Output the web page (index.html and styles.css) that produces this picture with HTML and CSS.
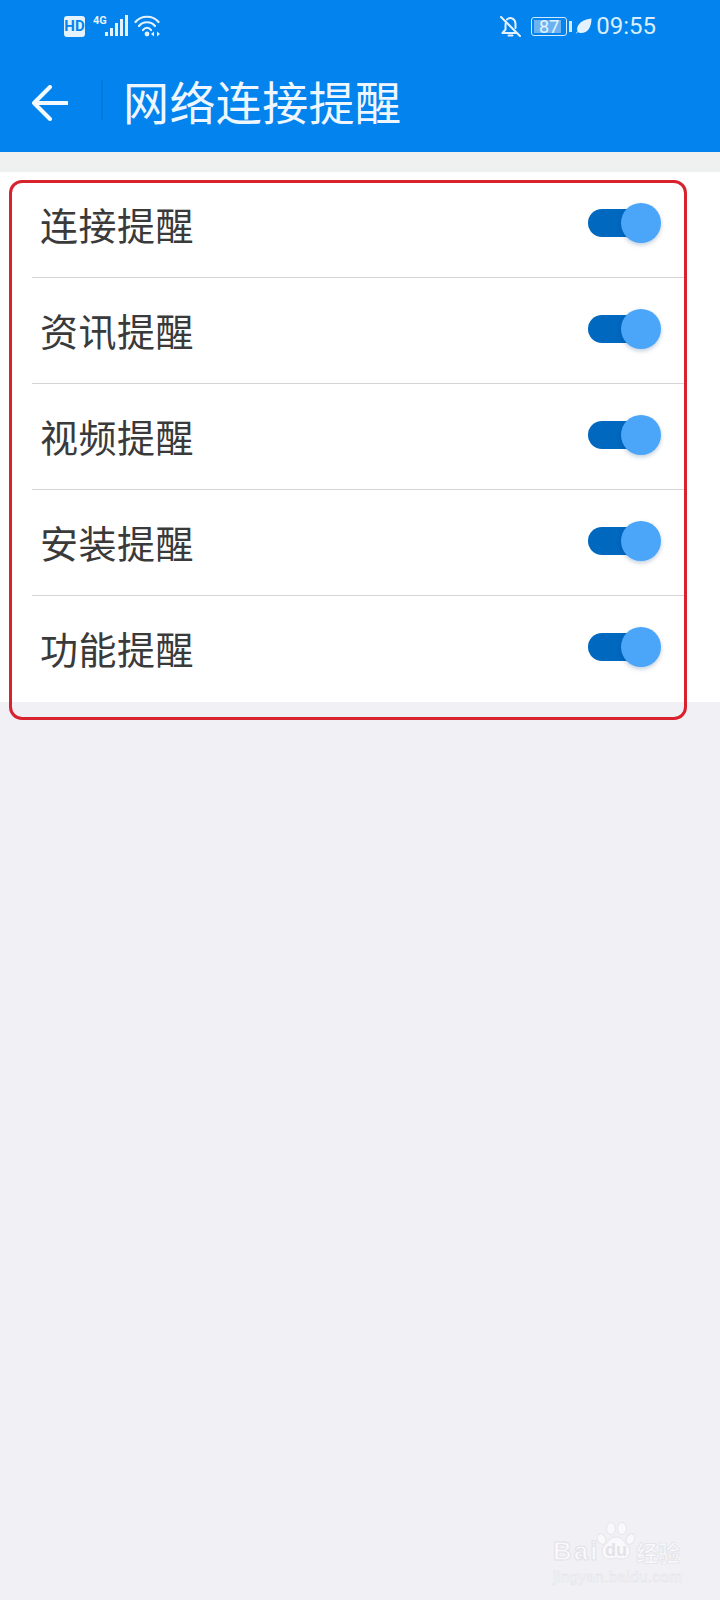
FILE: index.html
```html
<!DOCTYPE html>
<html lang="zh-CN">
<head>
<meta charset="utf-8">
<title>网络连接提醒</title>
<link rel="stylesheet" href="styles.css">
</head>
<body>
<div class="page">
  <header class="top">
    <div class="status">
      <div class="status-left">
        <span class="hd">HD</span>
        <span class="net">4G</span>
        <svg class="signal" width="23" height="22" viewBox="0 0 23 22"><g fill="#e4f2fe"><rect x="0" y="17" width="3" height="4"/><rect x="5" y="13" width="3" height="8"/><rect x="10" y="8" width="3" height="13"/><rect x="15" y="4" width="3" height="17"/><rect x="20" y="0" width="3" height="21"/></g></svg>
        <svg class="wifi" width="27" height="22" viewBox="0 0 27 22"><g fill="none" stroke="#e4f2fe" stroke-width="2.200" stroke-linecap="round"><path d="M1.500 7C7 0 19 0 24.500 7"/><path d="M5 11C9 6 17 6 21 11"/><path d="M9 15C11 12 15 12 17 15"/></g><circle cx="13" cy="19" r="2.400" fill="#e4f2fe"/><path d="M20 16.500l-3 2.500 3 2.500zM23 16.500l3 2.500-3 2.500z" fill="#e4f2fe"/></svg>
      </div>
      <div class="status-right">
        <svg class="bell" width="21" height="21" viewBox="0 0 21 21"><g fill="none" stroke="#e4f2fe" stroke-width="2" stroke-linecap="round" stroke-linejoin="round"><path d="M1 1l19 19"/><path d="M6 6.500C5.500 7.500 5.500 8.500 5.500 10v3.500L2.500 17h14"/><path d="M7 3.500C10.500 .5 15.500 2.500 15.500 8v4"/><path d="M8.500 19.500h4"/></g></svg>
        <span class="battery"><span class="battery-fill"></span><span class="battery-num">87</span></span>
        <span class="battery-tip"></span>
        <svg class="leaf" width="16" height="16" viewBox="0 0 16 16"><path d="M15.500 .5C15.500 9 12 15 5 15 3.500 15 2.500 14.500 2 14L0.500 15.500 0 15l1.500-1.500C0 9 3 2 15.500 .5z" fill="#e4f2fe"/></svg>
        <span class="time">09:55</span>
      </div>
    </div>
    <div class="bar">
      <svg class="back" width="36" height="36" viewBox="0 0 36 36"><path d="M18 2L2 18l16 16M2 18h33" fill="none" stroke="#f2f9ff" stroke-width="4" stroke-linecap="round" stroke-linejoin="round"/></svg>
      <span class="divider"></span>
      <h1 class="title">网络连接提醒</h1>
    </div>
  </header>
  <div class="strip"></div>
  <ul class="list">
    <li class="row"><span class="label">连接提醒</span><span class="switch"><span class="knob"></span></span></li>
    <li class="row"><span class="label">资讯提醒</span><span class="switch"><span class="knob"></span></span></li>
    <li class="row"><span class="label">视频提醒</span><span class="switch"><span class="knob"></span></span></li>
    <li class="row"><span class="label">安装提醒</span><span class="switch"><span class="knob"></span></span></li>
    <li class="row"><span class="label">功能提醒</span><span class="switch"><span class="knob"></span></span></li>
  </ul>
  <div class="highlight"></div>
  <div class="mark">
    <div class="mark-top">
      <span class="mark-bai">Bai</span>
      <span class="mark-paw">
        <svg width="38" height="42" viewBox="0 0 38 42"><g fill="#f9f9fb" stroke="#e6e6ea" stroke-width="1"><ellipse cx="4.500" cy="17" rx="4" ry="5.500" transform="rotate(-25 4.500 17)"/><ellipse cx="14" cy="6.500" rx="4.500" ry="6"/><ellipse cx="25" cy="6.500" rx="4.500" ry="6"/><ellipse cx="33.500" cy="17" rx="4" ry="5.500" transform="rotate(25 33.500 17)"/><path d="M19 15c6 0 8 5 12 9 4 5 1 13-6 13-3 0-4-1-6-1s-3 1-6 1c-7 0-10-8-6-13 4-4 6-9 12-9z"/></g></svg>
        <span class="mark-du">du</span>
      </span>
      <span class="mark-cn">经验</span>
    </div>
    <div class="mark-url">jingyan.baidu.com</div>
  </div>
</div>
</body>
</html>
```
FILE: styles.css
```css
* { box-sizing: border-box; }
html, body { margin: 0; padding: 0; }
body {
  background: #f0f0f5;
  font-family: "Noto Sans CJK SC", "Noto Sans", sans-serif;
}
.page {
  position: relative;
  width: 720px;
  height: 1600px;
  overflow: hidden;
  background: #f0f0f5;
}
.top {
  height: 152px;
  background: #0283ed;
  display: flex;
  flex-direction: column;
}
.status {
  height: 52px;
  padding: 15px 64px 0;
  display: flex;
  justify-content: space-between;
  align-items: flex-start;
}
.status-left, .status-right {
  display: flex;
  align-items: center;
  height: 22px;
}
.hd {
  width: 21px;
  height: 21px;
  border-radius: 3px;
  background: #e4f2fe;
  color: #0283ed;
  font: 700 15px/21px "Roboto", sans-serif;
  text-align: center;
}
.net {
  width: 20px;
  margin-left: 8px;
  margin-right: -8px;
  align-self: flex-start;
  color: #e4f2fe;
  font: 700 11px/12px "Roboto", sans-serif;
}
.signal { display: block; }
.wifi { display: block; margin-left: 6px; }
.bell { display: block; }
.battery {
  position: relative;
  width: 36px;
  height: 19px;
  margin-left: 10px;
  border: 1.500px solid #d3e9fd;
  border-radius: 3px;
  display: flex;
  align-items: center;
  justify-content: center;
}
.battery-fill {
  position: absolute;
  left: 2px;
  top: 2px;
  bottom: 2px;
  width: 27px;
  background: #6db2f0;
}
.battery-num {
  position: relative;
  color: #e4f2fe;
  font: 400 18px/15px "Roboto", sans-serif;
}
.battery-tip {
  width: 3px;
  height: 11px;
  margin-left: 2px;
  background: #d3e9fd;
}
.leaf { display: block; margin-left: 4px; }
.time {
  margin-left: 4px;
  color: #d9eeff;
  font: 400 24px/22px "Roboto", sans-serif;
  white-space: nowrap;
}
.bar {
  flex: 1;
  display: flex;
  align-items: center;
  padding: 0 0 4px 32px;
}
.back { display: block; margin-top: 6px; }
.divider {
  width: 2px;
  height: 40px;
  margin-left: 33px;
  background: #0479da;
}
.title {
  margin: 0 0 0 20px;
  color: #eef7ff;
  font-size: 46px;
  font-weight: 400;
  line-height: 64px;
  letter-spacing: .4px;
  white-space: nowrap;
}
.strip { height: 20px; background: #eff1f1; }
.list {
  margin: 0;
  padding: 0;
  list-style: none;
  background: #fff;
}
.row {
  height: 106px;
  margin: 0 35px 0 32px;
  padding: 0 35px 0 8px;
  border-bottom: 1px solid #d5d5d7;
  display: flex;
  align-items: center;
  justify-content: space-between;
}
.row:last-child { border-bottom: 0; }
.label {
  margin-bottom: 2px;
  color: #3a3a3a;
  font-size: 38px;
  line-height: 52px;
  letter-spacing: .5px;
  white-space: nowrap;
}
.switch {
  position: relative;
  display: block;
  width: 62px;
  height: 28px;
  margin-bottom: 4px;
  border-radius: 14px;
  background: #0068bf;
}
.knob {
  position: absolute;
  right: -11px;
  top: -6px;
  width: 40px;
  height: 40px;
  border-radius: 50%;
  background: #4ba6f9;
  box-shadow: 0 2px 4px rgba(0, 60, 120, .25);
}
.highlight {
  position: absolute;
  left: 9px;
  top: 180px;
  width: 678px;
  height: 540px;
  border: 3px solid #d8232f;
  border-radius: 13px;
}
.mark {
  position: absolute;
  left: 553px;
  top: 1522px;
  width: 130px;
  font-family: "Liberation Sans", sans-serif;
}
.mark-top {
  display: flex;
  align-items: flex-end;
  height: 42px;
}
.mark-bai {
  width: 44px;
  margin-bottom: -2px;
  color: #f9f9fb;
  font-size: 26px;
  font-weight: 700;
  line-height: 30px;
  letter-spacing: 2px;
  -webkit-text-stroke: 1px #e2e2e7;
}
.mark-paw {
  position: relative;
  display: block;
  width: 38px;
  height: 42px;
}
.mark-paw svg { display: block; }
.mark-du {
  position: absolute;
  left: 8px;
  bottom: 5px;
  color: #e2e2e7;
  font-size: 18px;
  font-weight: 700;
  line-height: 18px;
}
.mark-cn {
  margin-left: 1px;
  color: #f9f9fb;
  font-family: "Noto Sans CJK SC", sans-serif;
  font-size: 22px;
  font-weight: 700;
  line-height: 26px;
  white-space: nowrap;
  -webkit-text-stroke: .7px #e2e2e7;
}
.mark-url {
  margin-top: 4px;
  color: #f8f8fa;
  font-size: 15px;
  line-height: 17px;
  letter-spacing: .5px;
  white-space: nowrap;
  -webkit-text-stroke: .5px #e2e2e7;
}
```
